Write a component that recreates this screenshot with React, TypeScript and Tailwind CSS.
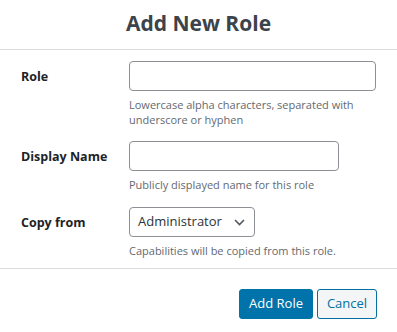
import * as React from "react";

const font = { fontFamily: '"Open Sans", "Noto Sans", sans-serif' };

interface FieldRowProps {
  label: string;
  help: string;
  children: React.ReactNode;
  className?: string;
}

function FieldRow({ label, help, children, className = "" }: FieldRowProps) {
  return (
    <div className={`grid grid-cols-[108px_1fr] ${className}`}>
      <div className="flex h-[30px] items-center pt-[3px] text-[12.5px] font-bold text-[#1d2327]">
        {label}
      </div>
      <div>
        {children}
        <p className="mt-[6px] text-[11px] leading-[15px] text-[#646970]">{help}</p>
      </div>
    </div>
  );
}

export default function App() {
  return (
    <div className="h-[332px] w-[397px] bg-white" style={font}>
      <div className="flex h-[50px] items-center justify-center border-b border-[#dcdcde] pb-[1px]">
        <h1 className="text-[21px] font-bold text-[#3c434a]">Add New Role</h1>
      </div>

      <div className="h-[219px] border-b border-[#dcdcde] px-[21px] pt-[11px]">
        <FieldRow label="Role" help="Lowercase alpha characters, separated with underscore or hyphen">
          <input
            type="text"
            className="block h-[30px] w-[247px] rounded-[4px] border border-[#8c8f94] bg-white px-2 text-[13px] outline-none"
          />
        </FieldRow>

        <FieldRow label="Display Name" help="Publicly displayed name for this role" className="mt-[14px]">
          <input
            type="text"
            className="block h-[30px] w-[210px] rounded-[4px] border border-[#8c8f94] bg-white px-2 text-[13px] outline-none"
          />
        </FieldRow>

        <FieldRow label="Copy from" help="Capabilities will be copied from this role." className="mt-[15px]">
          <div className="flex h-[30px] w-[126px] items-center justify-between rounded-[4px] border border-[#8c8f94] bg-white pl-[8px] pr-[9px] text-[13px] text-[#2c3338]">
            <span>Administrator</span>
            <svg width="11" height="7" viewBox="0 0 11 7" fill="none">
              <path d="M1 1l4.5 4.5L10 1" stroke="#50575e" strokeWidth="1.6" />
            </svg>
          </div>
        </FieldRow>
      </div>

      <div className="flex justify-end gap-[4px] pr-[20px] pt-[20px]">
        <button className="h-[30px] w-[74px] rounded-[3px] border border-[#0073aa] bg-[#0073aa] text-[13px] text-white">
          Add Role
        </button>
        <button className="h-[30px] w-[60px] rounded-[3px] border border-[#0071a1] bg-[#f3f5f6] text-[13px] text-[#0071a1]">
          Cancel
        </button>
      </div>
    </div>
  );
}
